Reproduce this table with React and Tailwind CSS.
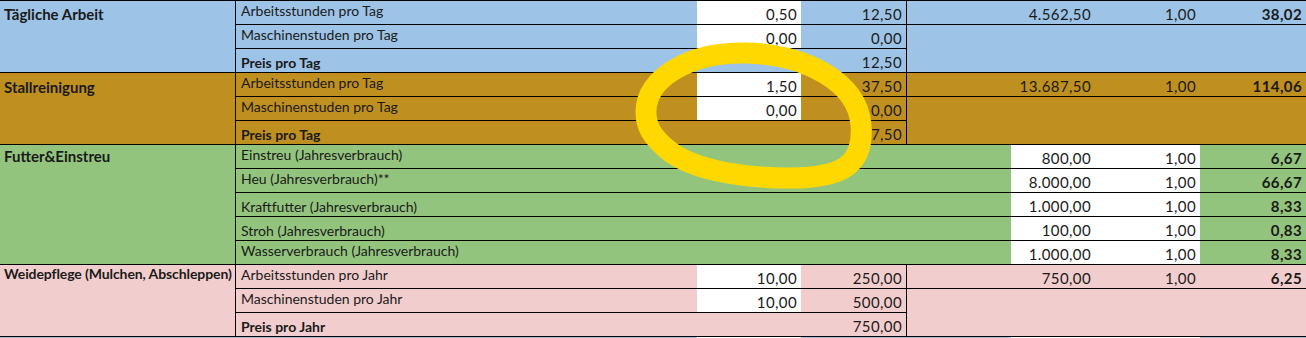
import React from "react";

const BLUE = "bg-[#9dc3e6]";
const BROWN = "bg-[#bf8f20]";
const GREEN = "bg-[#93c47d]";
const PINK = "bg-[#f2cdcd]";
const WHITE = "bg-white";

// one spreadsheet cell; v: "n" number (bottom), "c" centered label, "b" bottom label
function Cell({ bg, span = "", line = true, right = false, v = "n", align = "r", bold = false, children }) {
  const vpad = v === "n" ? "pb-[2px]" : v === "c" ? "pb-[5px]" : "pb-[1px]";
  return (
    <div
      className={[
        "flex items-end overflow-hidden whitespace-nowrap",
        bg,
        span,
        vpad,
        line ? "border-b border-black" : "",
        right ? "border-r border-black" : "",
        align === "r" ? "justify-end pr-[4px] text-[15px] tracking-[0.4px]" : "justify-start pl-[5px]",
        bold ? "font-bold" : "",
      ].join(" ")}
    >
      {children}
    </div>
  );
}

function Category({ bg, rows, pad, size = "text-[15px]", children }) {
  return (
    <div
      className={`${bg} ${rows} ${pad} ${size} col-start-1 border-b border-r border-black pl-[4px] font-bold whitespace-nowrap overflow-hidden`}
    >
      {children}
    </div>
  );
}

// three-row block: work hours, machine hours, price
function WorkBlock({ bg, title, pad, size, unit, hours, hoursCost, machine, machineCost, price, yearly, factor, total }) {
  return (
    <>
      <Category bg={bg} rows="row-span-3" pad={pad} size={size}>{title}</Category>
      <Cell bg={bg} v="c" align="l">Arbeitsstunden pro {unit}</Cell>
      <Cell bg={WHITE}>{hours}</Cell>
      <Cell bg={bg} right>{hoursCost}</Cell>
      <Cell bg={bg} span="col-span-2">{yearly}</Cell>
      <Cell bg={bg}>{factor}</Cell>
      <Cell bg={bg} bold>{total}</Cell>
      <Cell bg={bg} v="c" align="l">Maschinenstuden pro {unit}</Cell>
      <Cell bg={WHITE}>{machine}</Cell>
      <Cell bg={bg} right>{machineCost}</Cell>
      <div className={`${bg} col-span-4 row-span-2 border-b border-black`} />
      <Cell bg={bg} v="b" align="l" bold>Preis pro {unit}</Cell>
      <Cell bg={bg}></Cell>
      <Cell bg={bg} right>{price}</Cell>
    </>
  );
}

const feed = [
  ["Einstreu (Jahresverbrauch)", "800,00", "6,67", "c"],
  ["Heu (Jahresverbrauch)**", "8.000,00", "66,67", "c"],
  ["Kraftfutter (Jahresverbrauch)", "1.000,00", "8,33", "b"],
  ["Stroh (Jahresverbrauch)", "100,00", "0,83", "b"],
  ["Wasserverbrauch (Jahresverbrauch)", "1.000,00", "8,33", "c"],
];

export default function App() {
  return (
    <div className="relative w-[1306px] h-[338px] overflow-hidden bg-white text-[14px] leading-[16px] text-[#1a1a1a] font-['Lato',sans-serif]">
      <div className="grid grid-cols-[236px_461px_104px_106px_104px_84px_105px_106px] auto-rows-[24px] border-t border-black">
        <WorkBlock
          bg={BLUE}
          title="Tägliche Arbeit"
          pad="pt-[5px]"
          unit="Tag"
          hours="0,50"
          hoursCost="12,50"
          machine="0,00"
          machineCost="0,00"
          price="12,50"
          yearly="4.562,50"
          factor="1,00"
          total="38,02"
        />
        <WorkBlock
          bg={BROWN}
          title="Stallreinigung"
          pad="pt-[6px]"
          unit="Tag"
          hours="1,50"
          hoursCost="37,50"
          machine="0,00"
          machineCost="0,00"
          price="37,50"
          yearly="13.687,50"
          factor="1,00"
          total="114,06"
        />

        <Category bg={GREEN} rows="row-span-5" pad="pt-[3px]">Futter&amp;Einstreu</Category>
        {feed.map(([label, amount, total, v]) => (
          <React.Fragment key={label}>
            <Cell bg={GREEN} span="col-span-4" v={v} align="l">{label}</Cell>
            <Cell bg={WHITE}>{amount}</Cell>
            <Cell bg={WHITE}>1,00</Cell>
            <Cell bg={GREEN} bold>{total}</Cell>
          </React.Fragment>
        ))}

        <WorkBlock
          bg={PINK}
          title="Weidepflege (Mulchen, Abschleppen)"
          pad="pt-[1px]"
          size="text-[14px] tracking-[-0.1px]"
          unit="Jahr"
          hours="10,00"
          hoursCost="250,00"
          machine="10,00"
          machineCost="500,00"
          price="750,00"
          yearly="750,00"
          factor="1,00"
          total="6,25"
        />
      </div>

      <div className="flex h-[1px]">
        <div className={`${BLUE} w-[697px]`} />
        <div className={`${WHITE} w-[104px]`} />
        <div className={`${BLUE} w-[210px]`} />
        <div className={`${WHITE} w-[189px]`} />
        <div className={`${BLUE} flex-1`} />
      </div>

      {/* yellow highlighter ring drawn over the sheet */}
      <svg className="pointer-events-none absolute left-0 top-0" width="1306" height="338" viewBox="0 0 1306 338">
        <path
          d="M646 113 C645 78 690 52 745 53 C805 54 858 82 861 125 C864 163 845 178 790 178 C735 178 690 168 668 150 C652 137 646 126 646 113 Z"
          fill="none"
          stroke="#ffd800"
          strokeWidth="21"
          strokeLinejoin="round"
        />
      </svg>
    </div>
  );
}
